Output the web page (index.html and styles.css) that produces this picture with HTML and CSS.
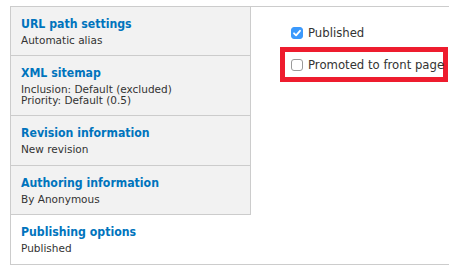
FILE: index.html
```html
<!DOCTYPE html>
<html>
<head>
<meta charset="utf-8">
<link rel="stylesheet" href="styles.css">
</head>
<body>
<div class="vtabs">
  <ul class="menu">
    <li class="item">
      <a class="title" href="#">URL path settings</a>
      <span class="summary">Automatic alias</span>
    </li>
    <li class="item">
      <a class="title" href="#">XML sitemap</a>
      <span class="summary">Inclusion: Default (excluded)<br>Priority: Default (0.5)</span>
    </li>
    <li class="item">
      <a class="title" href="#">Revision information</a>
      <span class="summary">New revision</span>
    </li>
    <li class="item">
      <a class="title" href="#">Authoring information</a>
      <span class="summary">By Anonymous</span>
    </li>
    <li class="item selected">
      <a class="title" href="#">Publishing options</a>
      <span class="summary">Published</span>
    </li>
  </ul>
  <div class="pane">
    <label class="check">
      <span class="box checked"><svg viewBox="0 0 12 12" width="12" height="12"><path d="M3 6.3 L5.1 8.4 L9 3.8" fill="none" stroke="#fff" stroke-width="1.8" stroke-linecap="round" stroke-linejoin="round"/></svg></span>
      <span class="label">Published</span>
    </label>
    <div class="highlight">
      <label class="check">
        <span class="box"></span>
        <span class="label">Promoted to front page</span>
      </label>
    </div>
  </div>
</div>
</body>
</html>
```
FILE: styles.css
```css
html, body {
  margin: 0;
  padding: 0;
  background: #fff;
}
body {
  font-family: "DejaVu Sans", Verdana, sans-serif;
  color: #333;
  overflow: hidden;
}
.vtabs {
  display: flex;
  margin: 6px 0 0 10px;
  width: 460px;
  border: 1px solid #ccc;
  border-right: none;
}
.menu {
  list-style: none;
  margin: 0;
  padding: 0;
  width: 240px;
  flex: none;
  background: #f2f2f2;
}
.item {
  display: flex;
  flex-direction: column;
  padding: 9px 10px 10px 10px;
  border-right: 1px solid #ccc;
  border-bottom: 1px solid #ccc;
}
.item:first-child {
  padding-top: 8.5px;
}
.item:last-child {
  border-bottom: none;
}
.item.selected {
  background: #fff;
  border-right-color: #fff;
}
.title {
  color: #0074bd;
  font-family: "DejaVu Sans Condensed", "DejaVu Sans", sans-serif;
  font-weight: bold;
  font-size: 12.2px;
  line-height: 16px;
  text-decoration: none;
}
.summary {
  font-size: 10.5px;
  line-height: 10.5px;
  color: #333;
  margin-top: 3px;
}
.pane {
  flex: 1;
  padding: 18px 0 0 29px;
}
.check {
  display: flex;
  align-items: center;
  gap: 5px;
  font-size: 11.7px;
  line-height: 16px;
  padding-left: 11px;
}
.box {
  width: 12px;
  height: 12px;
  box-sizing: border-box;
  border: 1px solid #9a9a9a;
  border-radius: 3px;
  background: #fff;
  display: flex;
  flex: none;
}
.box.checked {
  background: #3b99fc;
  border-color: #3b99fc;
}
.box svg {
  margin: -1px;
}
.highlight {
  margin-top: 6px;
  width: 158px;
  border: 5px solid #ee1c2e;
  padding: 5px 0 4px 0;
}
.highlight .check {
  padding-left: 6px;
  white-space: nowrap;
}
```
